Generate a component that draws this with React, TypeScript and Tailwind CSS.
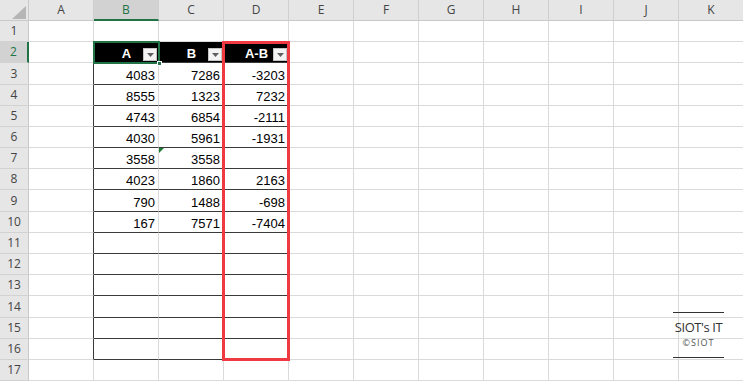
import React from "react";

const COLS = ["A", "B", "C", "D", "E", "F", "G", "H", "I", "J", "K"];

// px heights: column header + rows 1..17
const ROW_H = [21, 21, 21, 22, 21, 21, 21, 21, 21, 22, 21, 21, 21, 21, 22, 21, 21, 21];

const DATA: Record<number, (number | "")[]> = {
  3: [4083, 7286, -3203],
  4: [8555, 1323, 7232],
  5: [4743, 6854, -2111],
  6: [4030, 5961, -1931],
  7: [3558, 3558, ""],
  8: [4023, 1860, 2163],
  9: [790, 1488, -698],
  10: [167, 7571, -7404],
};

const HEADERS = ["A", "B", "A-B"];

function FilterButton() {
  return (
    <span className="absolute right-[2px] bottom-[1px] w-[14px] h-[13px] bg-[#f3f3f3] border border-[#c4c4c4] flex items-center justify-center">
      <svg width="7" height="4" viewBox="0 0 7 4">
        <path d="M0 0H7L3.5 4Z" fill="#5f5f5f" />
      </svg>
    </span>
  );
}

function Cell({ r, c }: { r: number; c: number }) {
  const inTable = r >= 2 && r <= 16 && c >= 1 && c <= 3;
  const isHead = inTable && r === 2;

  if (isHead) {
    return (
      <div className="relative bg-black border-b border-[#3a3a3a] flex items-end justify-center pb-px text-white font-bold text-[13px] leading-[15px]">
        {HEADERS[c - 1]}
        <FilterButton />
      </div>
    );
  }

  const value = DATA[r]?.[c - 1];
  return (
    <div
      className={
        "relative bg-white border-r flex items-end justify-end pr-[3px] pb-px text-[13px] leading-[15px] text-black " +
        (inTable ? "border-b border-b-[#3a3a3a] " : "border-b border-b-[#dadada] ") +
        (c === 0 && r >= 2 && r <= 16 ? "border-r-[#3a3a3a]" : "border-r-[#dadada]")
      }
    >
      {r === 7 && c === 2 && (
        <span className="absolute top-0 left-0 w-0 h-0 border-t-[5px] border-t-[#1d7a32] border-r-[5px] border-r-transparent" />
      )}
      {value}
    </div>
  );
}

export default function App() {
  return (
    <div
      className="relative w-[743px] h-[382px] overflow-hidden bg-white"
      style={{ fontFamily: '"Liberation Sans", Arial, sans-serif' }}
    >
      <div
        className="grid grid-cols-[29px_repeat(11,65px)]"
        style={{ gridTemplateRows: ROW_H.map((h) => `${h}px`).join(" ") }}
      >
        {/* corner */}
        <div className="bg-[#e6e6e6] border-r border-b border-[#c9c9c9] relative">
          <svg className="absolute right-[2px] bottom-[1px]" width="14" height="13" viewBox="0 0 14 13">
            <path d="M14 0V13H0Z" fill="#b5b5b5" />
          </svg>
        </div>
        {COLS.map((col, i) => (
          <div
            key={col}
            className={
              "flex items-center justify-center text-[12px] border-r border-r-[#cfcfcf] " +
              (i === 1
                ? "bg-[#d2d2d2] text-[#217346] border-b-2 border-b-[#217346]"
                : "bg-[#e6e6e6] text-[#444] border-b border-b-[#c9c9c9]")
            }
            style={{ fontFamily: '"Open Sans", sans-serif' }}
          >
            {col}
          </div>
        ))}

        {Array.from({ length: 17 }, (_, k) => k + 1).map((r) => (
          <React.Fragment key={r}>
            <div
              className={
                "flex items-center justify-center text-[12px] border-b border-b-[#d2d2d2] " +
                (r === 2
                  ? "bg-[#d2d2d2] text-[#217346] border-r-2 border-r-[#217346]"
                  : "bg-[#e6e6e6] text-[#444] border-r border-r-[#c9c9c9]")
              }
              style={{ fontFamily: '"Open Sans", sans-serif' }}
            >
              {r}
            </div>
            {COLS.map((col, c) => (
              <Cell key={col} r={r} c={c} />
            ))}
          </React.Fragment>
        ))}
      </div>

      {/* active cell B2 */}
      <div className="absolute left-[93px] top-[41px] w-[67px] h-[23px] border-2 border-[#217346]">
        <span className="absolute -right-[4px] -bottom-[4px] w-[5px] h-[5px] bg-[#217346] border border-white" />
      </div>

      {/* red highlight around column D */}
      <div className="absolute left-[222px] top-[41px] w-[68px] h-[320px] border-[3px] border-[#ee3a40]" />

      {/* watermark */}
      <div
        className="absolute left-[673px] top-[312px] w-[51px] h-[46px] border-t border-b border-[#333] flex flex-col items-center pt-[6px] text-[#333]"
        style={{ fontFamily: '"Open Sans", sans-serif' }}
      >
        <span className="text-[13px] leading-[16px] tracking-[-0.4px]">SIOT's IT</span>
        <span className="text-[9px] leading-[10px] tracking-[1px] mt-[3px] text-[#555]">©SIOT</span>
      </div>
    </div>
  );
}
